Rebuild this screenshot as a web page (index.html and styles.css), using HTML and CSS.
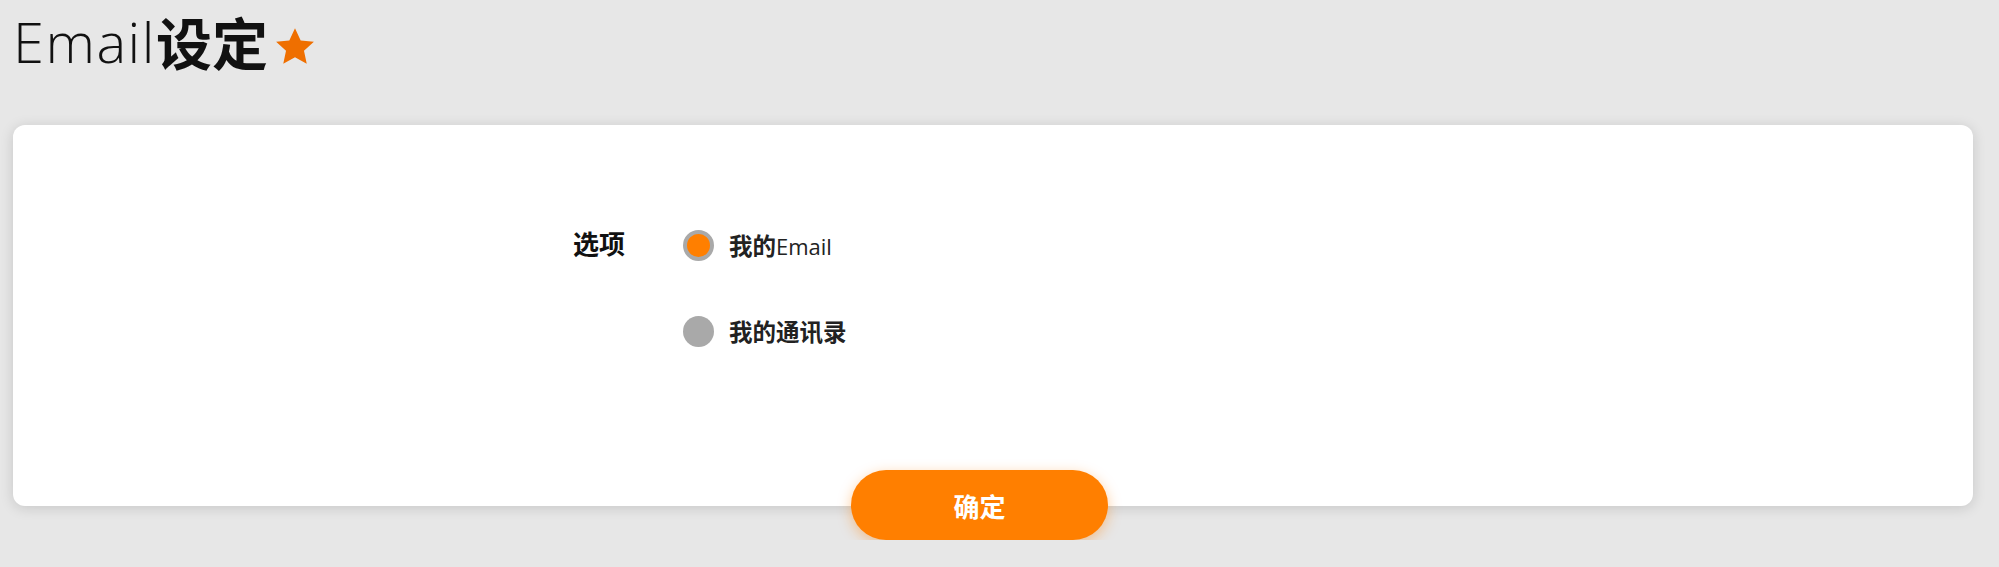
FILE: index.html
```html
<!DOCTYPE html>
<html lang="zh-CN">
<head>
    <meta charset="UTF-8">
    <meta name="viewport" content="width=device-width, initial-scale=1.0">
    <title>Email设定</title>
    <link rel="stylesheet" href="styles.css">
</head>
<body>

<div class="page">
    <h1 class="page-title">
        <span class="title-en">Email</span><span class="title-cn">设定</span>
        <svg class="star" viewBox="0 0 24 24" width="44" height="44">
            <path d="M12 1.8l3.1 6.6 7.2.8-5.4 4.9 1.5 7.1L12 17.6l-6.4 3.6 1.5-7.1-5.4-4.9 7.2-.8z" fill="#ef6f00"/>
        </svg>
    </h1>

    <div class="card">
        <div class="form-row">
            <div class="form-label">选项</div>
            <div class="options">
                <label class="option">
                    <span class="radio checked"></span>
                    <span class="option-text"><b>我的</b>Email</span>
                </label>
                <label class="option">
                    <span class="radio"></span>
                    <span class="option-text"><b>我的通讯录</b></span>
                </label>
            </div>
        </div>
    </div>

    <div class="actions">
        <button class="confirm-btn">确定</button>
    </div>
</div>

</body>
</html>
```

FILE: styles.css
```css
body {
    margin: 0;
    background-color: #e7e7e7;
    font-family: "Open Sans", "Noto Sans CJK SC", sans-serif;
    color: #222;
}
.page {
    padding: 0 26px 0 13px;
}
.page-title {
    margin: 0;
    padding: 3px 0 0 0;
    height: 125px;
    box-sizing: border-box;
    font-size: 56px;
    line-height: 76px;
    color: #111;
    display: flex;
    align-items: flex-start;
}
.title-en {
    font-weight: 300;
    letter-spacing: 1.5px;
}
.title-cn {
    font-family: "Noto Sans CJK SC", sans-serif;
    font-weight: 700;
}
.star {
    margin: 22px 0 0 5px;
}
.card {
    background-color: #ffffff;
    border-radius: 12px;
    box-shadow: 0 2px 14px rgba(0, 0, 0, 0.14);
    padding: 100px 0 155px 560px;
}
.form-row {
    display: flex;
}
.form-label {
    width: 110px;
    font-family: "Noto Sans CJK SC", sans-serif;
    font-weight: 700;
    font-size: 26px;
    line-height: 36px;
    color: #111;
}
.options {
    display: flex;
    flex-direction: column;
    gap: 46px;
}
.option {
    display: flex;
    align-items: center;
    height: 40px;
    gap: 15px;
    cursor: pointer;
}
.radio {
    width: 31px;
    height: 31px;
    border-radius: 50%;
    background-color: #a9a9a9;
    box-sizing: border-box;
}
.radio.checked {
    background-color: #ff7f00;
    border: 4px solid #a9a9a9;
}
.option-text {
    font-size: 22px;
    color: #222;
}
.option-text b {
    font-family: "Noto Sans CJK SC", sans-serif;
    font-weight: 700;
    font-size: 23.5px;
}
.actions {
    margin-top: -36px;
    padding-left: 838px;
}
.confirm-btn {
    width: 257px;
    height: 70px;
    border: none;
    border-radius: 35px;
    background-color: #ff7f00;
    color: #fff;
    font-family: "Noto Sans CJK SC", sans-serif;
    font-weight: 700;
    font-size: 26px;
    box-shadow: 0 4px 14px rgba(255, 127, 0, 0.4);
    cursor: pointer;
}
```
